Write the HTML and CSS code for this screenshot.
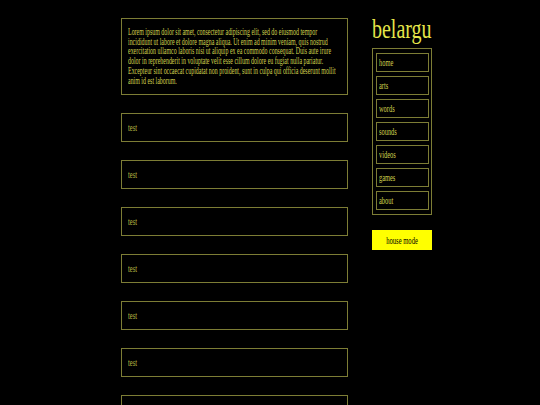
FILE: index.html
```html
<!DOCTYPE html>
<html lang="en">
<head>
<meta charset="utf-8">
<title>belargu</title>
<link rel="stylesheet" href="styles.css">
</head>
<body>
<div class="page">
  <main class="feed">
    <article class="card intro">
      <p class="lorem">Lorem ipsum dolor sit amet, consectetur adipiscing elit, sed do eiusmod tempor<br>incididunt ut labore et dolore magna aliqua. Ut enim ad minim veniam, quis nostrud<br>exercitation ullamco laboris nisi ut aliquip ex ea commodo consequat. Duis aute irure<br>dolor in reprehenderit in voluptate velit esse cillum dolore eu fugiat nulla pariatur.<br>Excepteur sint occaecat cupidatat non proident, sunt in culpa qui officia deserunt mollit<br>anim id est laborum.</p>
    </article>
    <article class="card post"><span class="post-text">test</span></article>
    <article class="card post"><span class="post-text">test</span></article>
    <article class="card post"><span class="post-text">test</span></article>
    <article class="card post"><span class="post-text">test</span></article>
    <article class="card post"><span class="post-text">test</span></article>
    <article class="card post"><span class="post-text">test</span></article>
    <article class="card post"><span class="post-text">test</span></article>
  </main>
  <aside class="side">
    <h1 class="logo"><span class="logo-text">belargu</span></h1>
    <nav class="nav">
      <a class="nav-item"><span class="nav-text">home</span></a>
      <a class="nav-item"><span class="nav-text">arts</span></a>
      <a class="nav-item"><span class="nav-text">words</span></a>
      <a class="nav-item"><span class="nav-text">sounds</span></a>
      <a class="nav-item"><span class="nav-text">videos</span></a>
      <a class="nav-item"><span class="nav-text">games</span></a>
      <a class="nav-item"><span class="nav-text">about</span></a>
    </nav>
    <button class="mode"><span class="mode-text">house mode</span></button>
  </aside>
</div>
</body>
</html>
```

FILE: styles.css
```css
html, body {
  margin: 0;
  padding: 0;
  background: #000;
}
body {
  font-family: "Liberation Serif", "Times New Roman", serif;
  color: #c9c94b;
  overflow: hidden;
}
.page {
  display: flex;
  align-items: flex-start;
  gap: 24px;
  padding: 18px 0 0 121px;
}
.feed {
  width: 227px;
  display: flex;
  flex-direction: column;
  gap: 18px;
}
.card {
  box-sizing: border-box;
  border: 1px solid #7d7d35;
  background: #000;
}
.intro {
  height: 77px;
  padding: 8px 6px;
  overflow: visible;
}
.lorem {
  margin: 0;
  font-size: 11px;
  line-height: 9.7px;
  white-space: nowrap;
  transform: scaleX(0.54);
  transform-origin: 0 0;
  color: #d2d24e;
}
.post {
  height: 29px;
  display: flex;
  align-items: center;
  padding: 0 6px;
}
.post-text {
  display: inline-block;
  font-size: 9.5px;
  color: #bcbc44;
  transform: scaleX(0.68);
  transform-origin: 0 50%;
}
.side {
  width: 60px;
  display: flex;
  flex-direction: column;
  margin-top: -2px;
}
.logo {
  margin: 0 0 6px 0;
  height: 26px;
  font-size: 27px;
  line-height: 26px;
  font-weight: normal;
  color: #e6e64a;
  white-space: nowrap;
}
.logo-text {
  display: inline-block;
  transform: scaleX(0.74);
  transform-origin: 0 50%;
}
.nav {
  box-sizing: border-box;
  border: 1px solid #7d7d35;
  padding: 4px 2px 4px 3px;
  display: flex;
  flex-direction: column;
  gap: 4px;
}
.nav-item {
  box-sizing: border-box;
  height: 19px;
  border: 1px solid #7d7d35;
  display: flex;
  align-items: center;
  padding: 0 2px;
  font-size: 10px;
  color: #d2d24e;
  white-space: nowrap;
}
.nav-text {
  display: inline-block;
  transform: scaleX(0.64);
  transform-origin: 0 50%;
}
.mode {
  margin-top: 15px;
  box-sizing: border-box;
  width: 60px;
  height: 20px;
  border: 0;
  background: #ffff00;
  color: #000;
  font-family: "Liberation Serif", "Times New Roman", serif;
  font-size: 10px;
  padding: 0;
  display: flex;
  align-items: center;
  justify-content: center;
  white-space: nowrap;
}
.mode-text {
  display: inline-block;
  transform: scaleX(0.66);
  transform-origin: 50% 50%;
}
```
